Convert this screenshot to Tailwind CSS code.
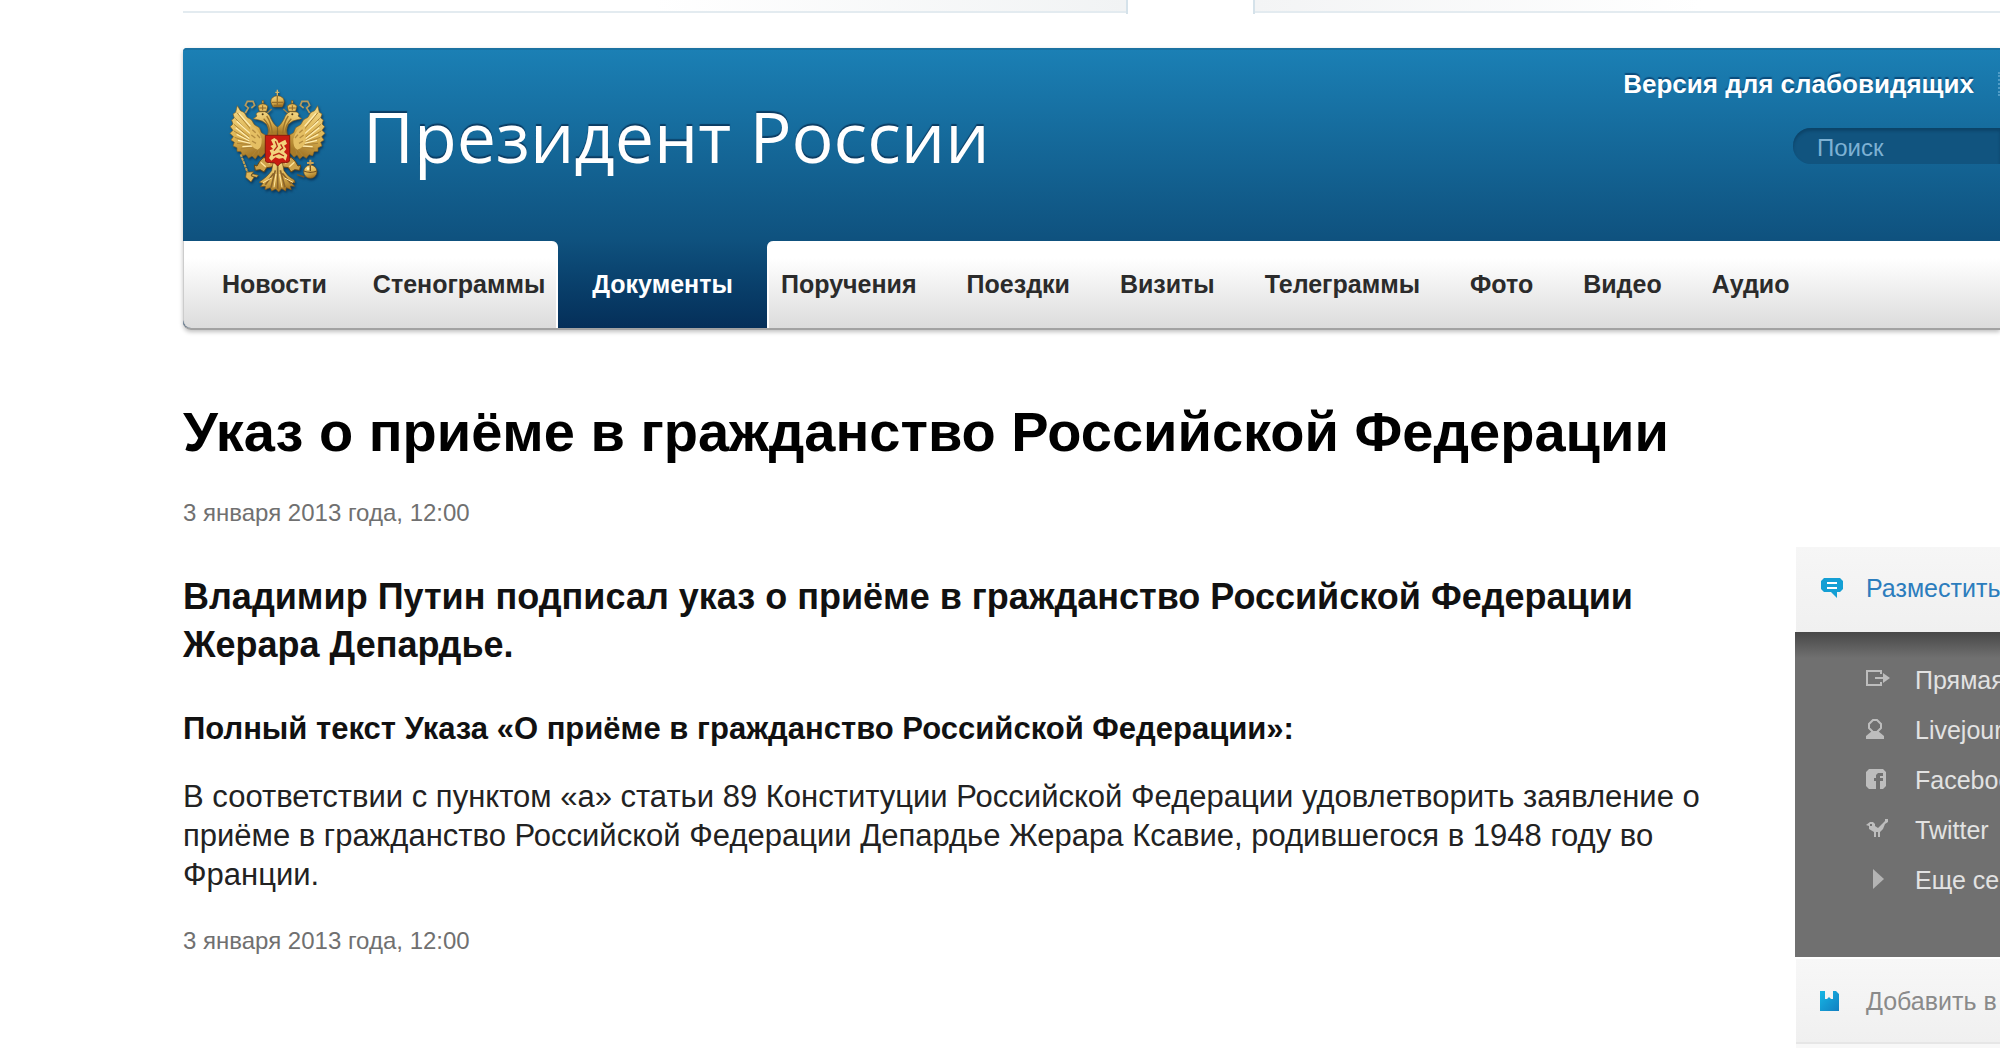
<!DOCTYPE html>
<html lang="ru">

<head>
    <meta charset="UTF-8">
    <meta name="viewport" content="width=device-width, initial-scale=1.0">
    <title>Президент России</title>
    <script src="https://cdn.jsdelivr.net/npm/@tailwindcss/browser@4"></script>
</head>

<body class="min-h-screen overflow-x-hidden bg-white font-['Liberation_Sans',Arial,sans-serif] text-[#111]">
    <!-- Bottom edge of the site switcher -->
    <div class="flex h-12 items-start pl-[183px]">
        <div class="h-[14px] w-[945px] border-r-2 border-[#d5e2ea]">
            <div class="h-[13px] border-b-2 border-[#e3ebf0] bg-linear-to-r from-white from-50% to-[#f1f3f4]"></div>
        </div>
        <div class="ml-[125px] h-[14px] flex-1 border-l-2 border-[#d5e2ea]">
            <div class="h-[13px] border-b-2 border-[#e3ebf0] bg-linear-to-r from-[#f3f4f5] to-white to-60%"></div>
        </div>
    </div>

    <div class="pl-[183px]">
        <header class="rounded-l-lg rounded-tl-[4px] border-b-2 border-[#a2a2a2] bg-linear-to-b from-[#1b80b5] via-[#0f527f] via-68% to-[#052f59] shadow-[0_2px_4px_rgba(0,0,0,0.25)]">
            <div class="flex h-[193px] items-start rounded-tl-[4px] border-t-2 border-[#1b72a2]">
                <a href="#" class="ml-8 mt-[30px] flex items-start gap-[18px]">
                    <svg class="h-[120px] w-[130px]" viewBox="0 0 390 360" aria-hidden="true">
                        <defs>
                            <linearGradient id="gold" x1="0" y1="0" x2="0.3" y2="1">
                                <stop offset="0" stop-color="#f6dc8c" />
                                <stop offset="0.6" stop-color="#dcb352" />
                                <stop offset="1" stop-color="#a87b29" />
                            </linearGradient>
                            <g id="half">
                                <!-- wing -->
                                <path d="M67 77 L76 92 L88 98 L96 112 L109 119 L118 134 L133 143 L139 158 L152 166 L150 218 L138 232 L129 225 L121 237 L111 228 L101 235 L93 224 L82 227 L78 215 L66 214 L66 203 L54 198 L58 187 L48 180 L55 170 L45 160 L54 151 L46 140 L54 132 L50 120 L58 114 L54 102 L62 97 Z" fill="url(#gold)" stroke="#8a6420" stroke-width="2" />
                                <path d="M66 98 L112 154 M61 115 L107 163 M57 133 L103 172 M57 153 L101 180 M59 172 L102 187 M66 190 L107 194 M77 207 L112 201 M93 221 L118 207 M112 227 L125 210 M129 222 L133 208" stroke="#ad8438" stroke-width="3" fill="none" />
                                <path d="M72 100 L116 150 M65 124 L110 165 M62 143 L104 176 M65 163 L104 183 M69 181 L107 190 M82 200 L112 198" stroke="#ffedb0" stroke-width="4" fill="none" />
                                <path d="M106 137 Q131 143 140 177 Q141 205 128 209 Q106 203 103 181 Z" fill="#e5bf63" />
                                <path d="M112 149 l10 9 M109 165 l12 9 M111 183 l12 7 M126 164 l9 10" stroke="#b48c3f" stroke-width="4" />
                                <!-- neck and head -->
                                <path d="M186 168 L157 169 Q165 149 155 133 Q144 121 128 119 L115 116 L126 108 Q119 101 131 96 L149 95 Q162 99 168 117 Q177 135 188 142 Z" fill="url(#gold)" stroke="#85601d" stroke-width="2" />
                                <path d="M155 108 Q169 127 172 160 M146 116 Q163 133 164 158" stroke="#9c742b" stroke-width="4" fill="none" />
                                <circle cx="143" cy="103" r="3" fill="#4b3513" />
                                <!-- small crown and ribbon -->
                                <path d="M133 94 L129 78 Q143 65 158 78 L155 94 Z M141 62 h5 v8 h-5 Z" fill="#e4bd60" stroke="#765417" stroke-width="2" />
                                <path d="M143 76 v15 M133 84 h20" stroke="#8c6728" stroke-width="3" />
                                <path d="M91 99 L100 84 L91 76 L97 64 L114 64 L119 76 L109 84" fill="none" stroke="#b99b5b" stroke-width="5" />
                                <!-- leg -->
                                <path d="M158 229 Q142 231 134 244 L126 258 L118 255 L121 271 L136 269 L147 276 L155 263 L170 261 L181 248 Z" fill="#cda24a" stroke="#664716" stroke-width="3" />
                                <path d="M137 247 l15 13 M149 237 l16 14" stroke="#ffe59b" stroke-width="4" />
                            </g>
                        </defs>
                        <g style="filter: drop-shadow(3px 5px 3px rgba(0,20,50,0.55))">
                            <use href="#half" />
                            <use href="#half" transform="translate(375 0) scale(-1 1)" />
                            <!-- tail -->
                            <path d="M174 249 L202 249 L207 272 Q219 291 238 300 L240 308 L229 308 L239 319 L226 318 L229 329 L214 323 L212 333 L200 326 L191 336 L182 327 L170 333 L166 323 L150 329 L151 319 L136 320 L144 310 L132 307 Q158 290 170 272 Z" fill="url(#gold)" stroke="#75521b" stroke-width="2" />
                            <path d="M188 255 V326 M181 271 L168 323 M196 271 L210 322 M176 280 L151 314 M202 280 L228 311" stroke="#8b642a" stroke-width="5" />
                            <path d="M183 282 L177 322 M194 282 L201 322 M170 294 L144 308 M209 294 L234 307" stroke="#ffe5a0" stroke-width="3" />
                            <!-- sceptre -->
                            <path d="M77 223 L101 286" stroke="#c4a050" stroke-width="6" stroke-dasharray="9 2" />
                            <path d="M94 277 L116 275 L108 286 L117 292 L108 306 L92 292 Z M112 281 L130 286 L126 292 L110 289 Z" fill="#dfb65a" stroke="#73531c" stroke-width="2" />
                            <!-- orb -->
                            <path d="M283 239 h6 v7 h7 v6 h-7 v7 h-6 v-7 h-7 v-6 h7 Z" fill="#cda456" />
                            <circle cx="286" cy="275" r="20" fill="url(#gold)" stroke="#68491b" stroke-width="2" />
                            <path d="M266 273 Q286 281 306 273 M286 256 V273 M246 284 L268 291" stroke="#775421" stroke-width="4" fill="none" />
                            <circle cx="279" cy="266" r="4" fill="#fff3c1" />
                            <!-- big crown -->
                            <path d="M187 29 V48 M181 37 H193" stroke="#d9b865" stroke-width="4" />
                            <path d="M174 81 Q163 64 171 54 Q187 40 204 54 Q212 65 202 81 Z" fill="url(#gold)" stroke="#765319" stroke-width="2" />
                            <path d="M187 48 V78 M171 67 H205 M176 76 H200" stroke="#97702c" stroke-width="4" />
                            <path d="M170 87 L157 99 M205 87 L218 99" stroke="#97804b" stroke-width="5" />
                            <!-- shield -->
                            <path d="M151 166 H224 V240 Q224 248 212 248 H198 L188 258 L178 248 H162 Q151 248 151 240 Z" fill="#c91c12" stroke="#8d1d0c" stroke-width="3" />
                            <path d="M168 180 L178 174 L187 180 L191 190 L202 184 L211 179 L216 191 L207 197 L214 207 L207 216 L217 225 L212 242 L204 234 L192 236 L181 232 L169 242 L162 234 L169 222 L164 211 L174 207 L166 198 L175 194 Z" fill="#f3d47d" />
                            <path d="M181 184 L187 199 L177 212 M197 193 L203 204 L194 211 M174 227 L192 220 L207 228" fill="none" stroke="#b72814" stroke-width="4" />
                        </g>
                    </svg>
                    <span class="mt-2 font-['Open_Sans','Noto_Sans',sans-serif] text-[70px] leading-[96px] text-white [text-shadow:0_-2px_1px_#0b3c63]">Президент России</span>
                </a>
                <div class="ml-auto flex flex-col items-end">
                    <div class="mt-[22px] flex h-6 items-center border-r-2 border-dotted border-[#4f9cc6] pr-6">
                        <a href="#" class="text-[26px] font-bold leading-8 text-white [text-shadow:0_-2px_1px_#0b4c7c]">Версия для слабовидящих</a>
                    </div>
                    <input type="search" aria-label="Поиск" placeholder="Поиск" class="mt-8 h-9 w-[207px] rounded-l-full bg-[#11547f] pl-6 pt-1 text-2xl text-white shadow-[inset_0_3px_3px_#0c4469] outline-none placeholder:text-[#7db1d3]">
                </div>
            </div>

            <nav class="flex h-[87px] text-[25px] font-bold leading-8 text-[#2b2b2b]">
                <div class="flex w-[375px] items-center gap-[46px] rounded-bl-lg rounded-tr-[6px] border-l border-r-2 border-l-[#ccc] border-r-white bg-linear-to-b from-white from-20% to-[#dcdcdc] pb-[2px] pl-[38px]">
                    <a href="#">Новости</a>
                    <a href="#">Стенограммы</a>
                </div>
                <div class="flex w-[209px] items-center justify-center pb-[2px]">
                    <a href="#" aria-current="page" class="text-white">Документы</a>
                </div>
                <div class="flex flex-1 items-center gap-[50px] rounded-tl-[6px] border-l-2 border-white bg-linear-to-b from-white from-20% to-[#dcdcdc] pb-[2px] pl-3">
                    <a href="#">Поручения</a>
                    <a href="#">Поездки</a>
                    <a href="#">Визиты</a>
                    <a href="#">Телеграммы</a>
                    <a href="#">Фото</a>
                    <a href="#">Видео</a>
                    <a href="#">Аудио</a>
                </div>
            </nav>
        </header>

        <div class="flex items-start justify-between">
            <main class="w-[1560px] pt-[70px]">
                <h1 class="text-[56px] font-bold leading-[64px] text-black">Указ о приёме в гражданство Российской Федерации</h1>
                <p class="mt-[33px] text-2xl text-[#707070]">3 января 2013 года, 12:00</p>
                <p class="mt-11 text-[36px] font-bold leading-[48px]">Владимир Путин подписал указ о приёме в гражданство Российской Федерации Жерара Депардье.</p>
                <h2 class="mt-10 text-[31px] font-bold leading-10">Полный текст Указа «О приёме в гражданство Российской Федерации»:</h2>
                <p class="mt-7 text-[31px] leading-[39px] text-[#222]">В соответствии с пунктом «а» статьи 89 Конституции Российской Федерации удовлетворить заявление о приёме в гражданство Российской Федерации Депардье Жерара Ксавие, родившегося в 1948 году во Франции.</p>
                <p class="mt-[31px] text-2xl text-[#707070]">3 января 2013 года, 12:00</p>
            </main>

            <aside class="mt-[217px] w-[205px] overflow-hidden whitespace-nowrap text-[25px] leading-8">
                <a href="#" class="ml-px flex h-[85px] items-center bg-linear-to-b from-[#f6f6f6] to-[#f0f0f0] pb-1 pl-6 text-[#2c7dbd]">
                    <svg class="mr-[22px] h-5 w-6 shrink-0" viewBox="0 0 24 20">
                        <path d="M4 0H20L23 3V11L20 14H17V20L11 14H4L1 11V3Z" fill="#149fd4" />
                        <path d="M7 5H17M7 10H17" stroke="#fff" stroke-width="2" />
                    </svg>
                    Разместить
                </a>
                <ul class="h-[325px] bg-[#707070] bg-linear-to-b from-[#484848] to-[#707070] to-8% pt-[23px] text-[#e2e2e2]">
                    <li>
                        <a href="#" class="flex h-[50px] items-center pl-[70px]">
                            <svg class="mr-[26px] h-6 w-6 shrink-0 overflow-visible" viewBox="0 0 24 24" fill="none" stroke="#bdbdbd" stroke-width="2">
                                <path d="M16 6V3H2V17H16V14M10 10H19" />
                                <path d="M18 5L25 10L18 15Z" fill="#bdbdbd" stroke="none" />
                            </svg>
                            Прямая ссылка
                        </a>
                    </li>
                    <li>
                        <a href="#" class="flex h-[50px] items-center pl-[70px]">
                            <svg class="mr-[26px] h-6 w-6 shrink-0" viewBox="0 0 24 24">
                                <path d="M8 2H12L16 6V10L12 14H8L4 10V6Z" fill="none" stroke="#bdbdbd" stroke-width="2" />
                                <path d="M7 13H13L19 18V21H1V18Z" fill="#bdbdbd" />
                            </svg>
                            Livejournal
                        </a>
                    </li>
                    <li>
                        <a href="#" class="flex h-[50px] items-center pl-[70px]">
                            <svg class="mr-[26px] h-6 w-6 shrink-0" viewBox="0 0 24 24">
                                <path d="M4 1H18L21 4V18L18 21H15V13H18V10H15V8H18V5H13L11 7V10H9V13H11V21H4L1 18V4Z" fill="#bdbdbd" />
                            </svg>
                            Facebook
                        </a>
                    </li>
                    <li>
                        <a href="#" class="flex h-[50px] items-center pl-[70px]">
                            <svg class="mr-[26px] h-6 w-6 shrink-0" viewBox="0 0 24 24">
                                <path d="M1 7L5 4H8L10 6V8L13 10L20 3V1H23V4L20 6L18 11L15 14V19H13V14H11V19H9V14L4 11V8Z" fill="#bdbdbd" />
                                <path d="M5 6h2v2h-2Z" fill="#707070" />
                            </svg>
                            Twitter
                        </a>
                    </li>
                    <li>
                        <a href="#" class="flex h-[50px] items-center pl-[70px]">
                            <svg class="mr-[26px] h-6 w-6 shrink-0" viewBox="0 0 24 24">
                                <path d="M8 1L19 11L8 21Z" fill="#b4b4b4" />
                            </svg>
                            Еще сервисы
                        </a>
                    </li>
                </ul>
                <a href="#" class="ml-px mt-[2px] flex h-[85px] items-center border-b-2 border-[#e6e6e6] bg-linear-to-b from-[#f7f7f7] to-[#f0f0f0] pl-6 text-[#8a8a8a]">
                    <svg class="mr-[22px] h-5 w-6 shrink-0" viewBox="0 0 24 20">
                        <linearGradient id="cyan" x1="0" y1="0" x2="1" y2="1">
                            <stop offset="0" stop-color="#16b7e5" />
                            <stop offset="1" stop-color="#127fc1" />
                        </linearGradient>
                        <path d="M0 0H5V8H7L9 6L11 8H13V0H16L19 3V20H0Z" fill="url(#cyan)" />
                    </svg>
                    Добавить в
                </a>
                <div class="ml-px h-1 bg-[#f8f8f8]"></div>
            </aside>
        </div>
    </div>
</body>

</html>
